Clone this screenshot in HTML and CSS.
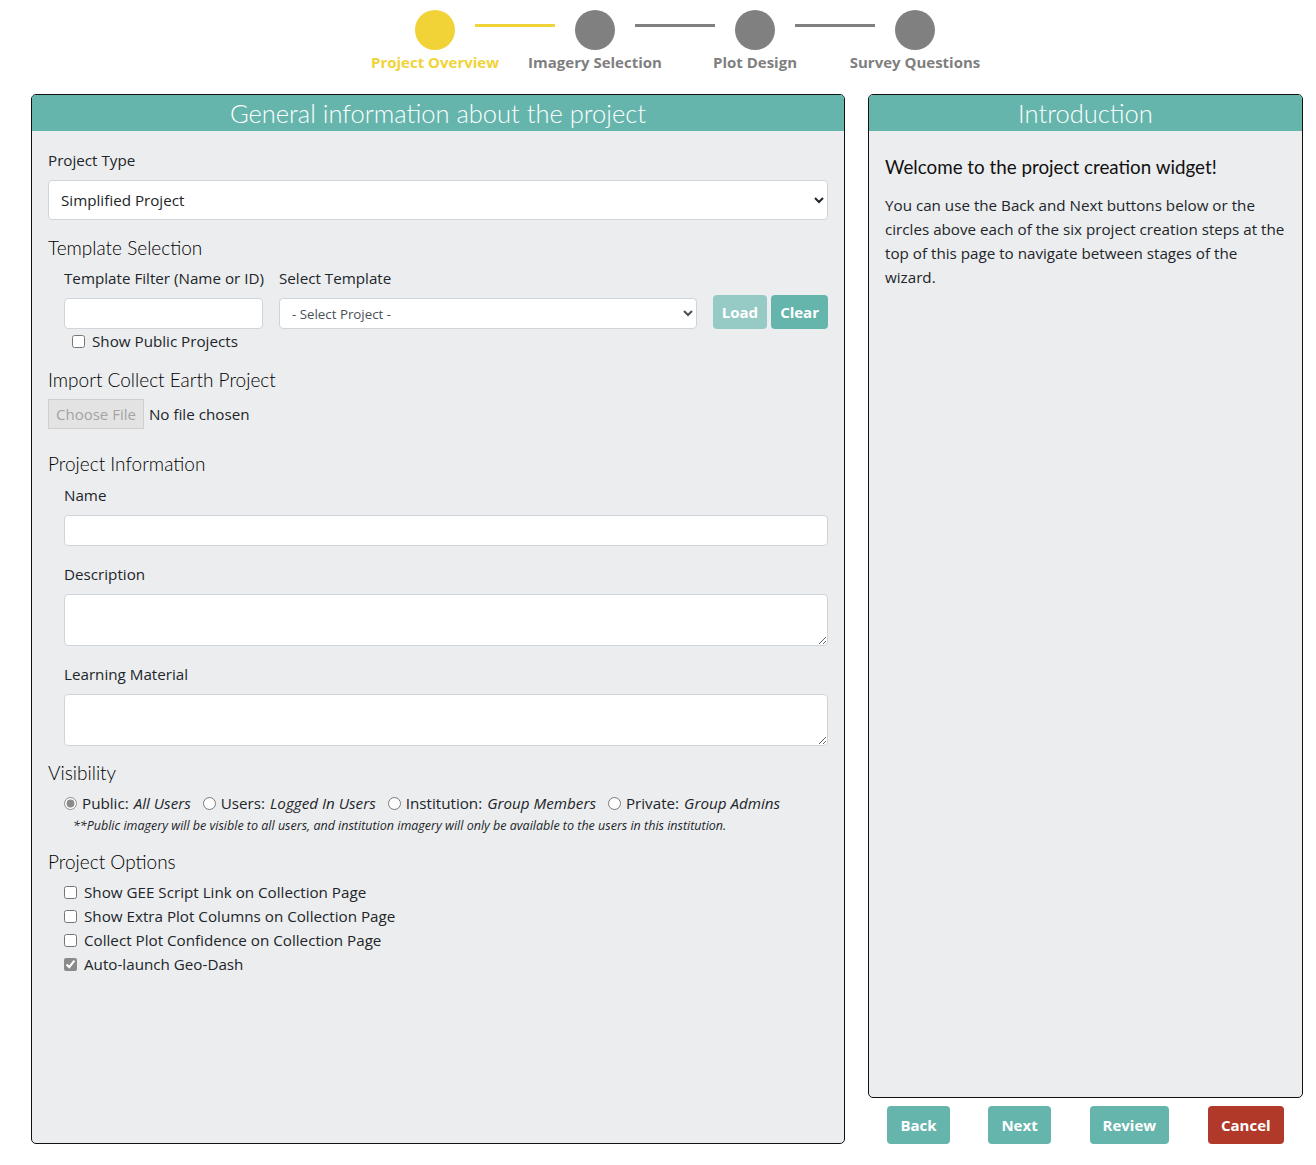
FILE: index.html
```html
<!DOCTYPE html>
<html lang="en">
<head>
<meta charset="utf-8">
<title>Create Project</title>
<link rel="stylesheet" href="styles.css">
</head>
<body>
<div class="stepper">
  <div class="track">
    <span class="dot dot-active"></span>
    <span class="bar bar-active"></span>
    <span class="dot"></span>
    <span class="bar"></span>
    <span class="dot"></span>
    <span class="bar"></span>
    <span class="dot"></span>
  </div>
  <div class="step-labels">
    <span class="step-label step-label-active">Project Overview</span>
    <span class="step-label">Imagery Selection</span>
    <span class="step-label">Plot Design</span>
    <span class="step-label">Survey Questions</span>
  </div>
</div>

<div class="main">
  <section class="panel panel-left">
    <h2 class="panel-title">General information about the project</h2>
    <div class="panel-body">
      <div class="group">
        <label class="label">Project Type</label>
        <select class="select select-lg">
          <option>Simplified Project</option>
        </select>
      </div>

      <h3 class="heading">Template Selection</h3>
      <div class="template-grid">
        <label class="label-inline">Template Filter (Name or ID)</label>
        <label class="label-inline">Select Template</label>
        <span></span>
        <input class="input" type="text">
        <select class="select select-sm">
          <option>- Select Project -</option>
        </select>
        <div class="btn-pair">
          <button class="btn btn-teal btn-disabled">Load</button>
          <button class="btn btn-teal">Clear</button>
        </div>
        <label class="check check-public"><input type="checkbox"> Show Public Projects</label>
      </div>

      <h3 class="heading heading-import">Import Collect Earth Project</h3>
      <div class="file-row">
        <span class="file-btn">Choose File</span>
        <span class="file-text">No file chosen</span>
      </div>

      <h3 class="heading heading-info">Project Information</h3>
      <div class="indent">
        <div class="group">
          <label class="label">Name</label>
          <input class="input" type="text">
        </div>
        <div class="group">
          <label class="label">Description</label>
          <textarea class="textarea" rows="2"></textarea>
        </div>
        <div class="group group-last">
          <label class="label">Learning Material</label>
          <textarea class="textarea" rows="2"></textarea>
        </div>
      </div>

      <h3 class="heading">Visibility</h3>
      <div class="indent">
        <div class="radios">
          <label class="radio"><input type="radio" name="vis" checked> Public: <em>All Users</em></label>
          <label class="radio"><input type="radio" name="vis"> Users: <em>Logged In Users</em></label>
          <label class="radio"><input type="radio" name="vis"> Institution: <em>Group Members</em></label>
          <label class="radio"><input type="radio" name="vis"> Private: <em>Group Admins</em></label>
        </div>
        <p class="note">**Public imagery will be visible to all users, and institution imagery will only be available to the users in this institution.</p>
      </div>

      <h3 class="heading">Project Options</h3>
      <div class="indent options">
        <label class="check"><input type="checkbox"> Show GEE Script Link on Collection Page</label>
        <label class="check"><input type="checkbox"> Show Extra Plot Columns on Collection Page</label>
        <label class="check"><input type="checkbox"> Collect Plot Confidence on Collection Page</label>
        <label class="check"><input type="checkbox" checked> Auto-launch Geo-Dash</label>
      </div>
    </div>
  </section>

  <div class="side">
    <section class="panel panel-right">
      <h2 class="panel-title">Introduction</h2>
      <div class="panel-body panel-body-intro">
        <h3 class="intro-heading">Welcome to the project creation widget!</h3>
        <p class="intro-text">You can use the Back and Next buttons below or the circles above each of the six project creation steps at the top of this page to navigate between stages of the wizard.</p>
      </div>
    </section>
    <div class="nav-buttons">
      <button class="btn btn-teal btn-nav">Back</button>
      <button class="btn btn-teal btn-nav">Next</button>
      <button class="btn btn-teal btn-nav">Review</button>
      <button class="btn btn-red btn-nav">Cancel</button>
    </div>
  </div>
</div>
</body>
</html>
```

FILE: styles.css
```css
* { box-sizing: border-box; }

body {
  margin: 0;
  font-family: "Open Sans", "Noto Sans", sans-serif;
  font-size: 15.2px;
  line-height: 24px;
  color: #212529;
  background: #fff;
}

/* ---------- stepper ---------- */
.stepper {
  padding-top: 10px;
}
.track {
  display: flex;
  align-items: flex-start;
  margin-left: 415px;
}
.dot {
  width: 40px;
  height: 40px;
  border-radius: 50%;
  background: #808080;
  flex: none;
}
.dot-active { background: #f1d337; }
.bar {
  width: 80px;
  height: 3px;
  margin: 14px 20px 0;
  background: #808080;
  flex: none;
}
.bar-active { background: #f1d337; }

.step-labels {
  display: flex;
  margin-left: 355px;
  margin-top: 2px;
}
.step-label {
  width: 160px;
  text-align: center;
  font-weight: 700;
  font-size: 15px;
  line-height: 20px;
  color: #7f7f7f;
}
.step-label-active { color: #f1d337; }

/* ---------- main ---------- */
.main {
  display: flex;
  gap: 23px;
  padding-left: 31px;
  margin-top: 22px;
}

.panel {
  border: 1px solid #111;
  border-radius: 5px;
  background: #ecedef;
  overflow: hidden;
}
.panel-left {
  width: 814px;
  height: 1050px;
  flex: none;
}
.panel-title {
  margin: 0;
  height: 36px;
  background: #65b5ad;
  color: #fff;
  text-align: center;
  font-family: Lato, sans-serif;
  font-weight: 300;
  font-size: 25.5px;
  line-height: 36px;
}
.panel-body {
  padding: 17px 16px 16px;
}

.group { margin-bottom: 16px; }
.group-last { margin-bottom: 15px; }
.label {
  display: block;
  margin-bottom: 8px;
}
.label-inline {
  display: block;
  white-space: nowrap;
}

.heading {
  margin: 0 0 6px;
  font-family: Lato, sans-serif;
  font-weight: 300;
  font-size: 19px;
  line-height: 24px;
  color: #000;
}
.heading-import { margin-bottom: 7px; }
.heading-info { margin-bottom: 7px; }

.select {
  display: block;
  width: 100%;
  background: #fff;
  border: 1px solid #ced4da;
  border-radius: 4px;
  color: #212529;
  font-family: inherit;
}
.select-lg {
  height: 40px;
  padding: 0 8px;
  font-size: 15.2px;
}
.select-sm {
  height: 31px;
  padding: 0 8px;
  font-size: 13.3px;
  color: #495057;
}
.input {
  display: block;
  width: 100%;
  height: 31px;
  background: #fff;
  border: 1px solid #ced4da;
  border-radius: 4px;
  font-family: inherit;
  font-size: 14px;
  padding: 0 8px;
}
.textarea {
  display: block;
  width: 100%;
  height: 52px;
  background: #fff;
  border: 1px solid #ced4da;
  border-radius: 4px;
  font-family: inherit;
  font-size: 14px;
  padding: 4px 8px;
  resize: vertical;
}

.indent { padding-left: 16px; }

/* template row */
.template-grid {
  display: grid;
  grid-template-columns: 199px 1fr auto;
  column-gap: 16px;
  align-items: end;
  padding-left: 16px;
  margin-bottom: 15px;
}
.template-grid .input { margin-top: 8px; }
.template-grid .select-sm { margin-top: 8px; }
.btn-pair {
  display: flex;
  gap: 4px;
}
.check-public {
  grid-column: 1 / 2;
  padding-left: 8px;
}

.btn {
  border: none;
  border-radius: 4px;
  color: #fff;
  font-family: inherit;
  font-weight: 700;
  font-size: 15px;
  cursor: pointer;
}
.btn-teal { background: #65b5ad; }
.btn-disabled { background: #96cac5; }
.btn-red { background: #b0392a; }
.btn-pair .btn {
  height: 34px;
  padding: 0 9px;
}

/* file */
.file-row {
  display: flex;
  align-items: center;
  gap: 5px;
  margin-bottom: 23px;
}
.file-btn {
  display: inline-block;
  height: 30px;
  padding: 0 7px;
  line-height: 28px;
  border: 1px solid #cfcfcf;
  background: #e3e3e3;
  color: #a3a3a3;
  font-size: 15px;
}
.file-text { color: #212529; }

/* checks / radios */
.check {
  display: flex;
  align-items: center;
  gap: 7px;
}
.check input,
.radio input {
  margin: 0;
  width: 13px;
  height: 13px;
  accent-color: #8a8a8a;
}
.radios {
  display: flex;
  align-items: center;
}
.radio {
  display: inline-flex;
  align-items: center;
  gap: 5px;
  margin-right: 12px;
}
.radio em { font-style: italic; }
.note {
  margin: 2px 0 15px 9px;
  font-size: 12.5px;
  line-height: 18px;
  font-style: italic;
}

/* side */
.side {
  width: 435px;
  flex: none;
  display: flex;
  flex-direction: column;
}
.panel-right { flex: 1; }
.panel-body-intro { padding: 24px 16px 16px; }
.intro-heading {
  margin: 0 0 14px;
  font-family: Lato, sans-serif;
  font-weight: 400;
  font-size: 18.8px;
  line-height: 24px;
  color: #111;
}
.intro-text {
  margin: 0;
}

.nav-buttons {
  display: flex;
  justify-content: space-around;
  margin-top: 8px;
}
.btn-nav {
  height: 38px;
  padding: 0 13px;
}
```
